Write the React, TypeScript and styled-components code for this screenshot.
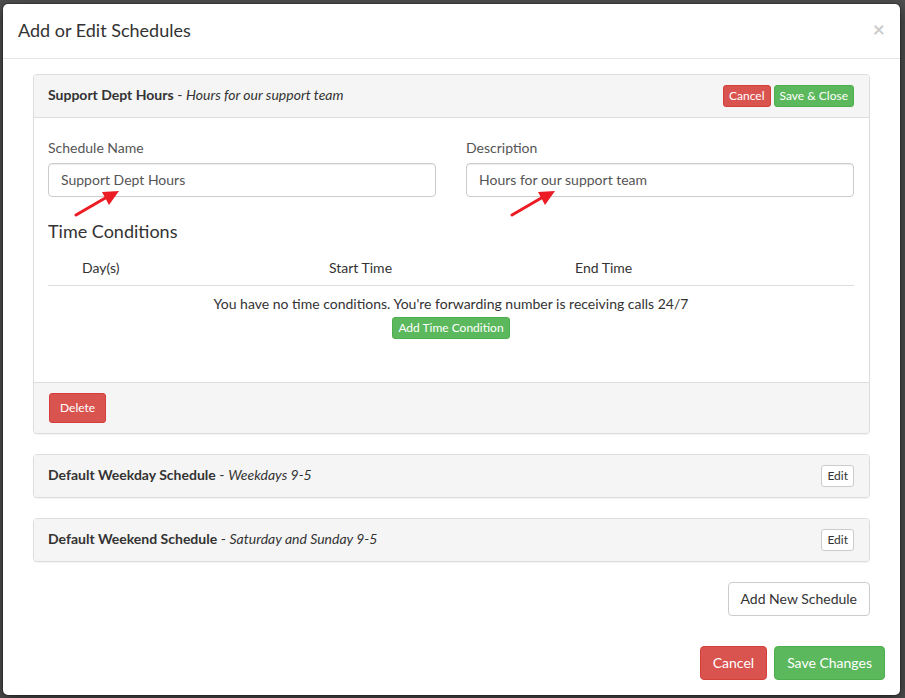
import { createGlobalStyle, styled } from 'styled-components';

const GlobalStyle = createGlobalStyle`
	* {
		box-sizing: border-box;
	}
	body {
		margin: 0;
		background: #4f4f4f;
		font-family: Lato, 'Open Sans', 'Liberation Sans', sans-serif;
		font-size: 14px;
		line-height: 1.42857;
		color: #333;
	}
`;

const Backdrop = styled.div`
	min-height: 698px;
	padding: 3px 0 3px 2px;
`;

const Modal = styled.div`
	width: 899px;
	background: #fff;
	border: 1px solid rgba(0, 0, 0, 0.2);
	border-radius: 6px;
	box-shadow: 0 5px 15px rgba(0, 0, 0, 0.5);
	background-clip: padding-box;
`;

const Header = styled.div`
	display: flex;
	align-items: center;
	justify-content: space-between;
	padding: 14px 15px 14px;
	border-bottom: 1px solid #e5e5e5;
`;

const Title = styled.h4`
	margin: 0;
	font-size: 18px;
	font-weight: 400;
	line-height: 1.42857;
`;

const Close = styled.button`
	border: 0;
	background: none;
	padding: 0;
	margin-top: -4px;
	font-family: inherit;
	font-size: 21px;
	font-weight: 700;
	line-height: 1;
	color: #000;
	opacity: 0.2;
	cursor: pointer;
`;

const Body = styled.div`
	padding: 15px 30px;
	display: flex;
	flex-direction: column;
	gap: 20px;
`;

const Panel = styled.div`
	border: 1px solid #ddd;
	border-radius: 4px;
	background: #fff;
	box-shadow: 0 1px 1px rgba(0, 0, 0, 0.05);
	overflow: hidden;
`;

const PanelHeading = styled.div<{ $open?: boolean }>`
	display: flex;
	align-items: center;
	justify-content: space-between;
	padding: 10px 15px 10px 14px;
	min-height: 42px;
	background: #f5f5f5;
	border-bottom: ${(p) => (p.$open ? '1px solid #ddd' : '0')};
`;

const PanelTitle = styled.div`
	font-size: 14px;
	color: #333;
	margin-top: -2px;

	strong {
		font-weight: 700;
	}

	em {
		font-style: italic;
	}
`;

const PanelBody = styled.div`
	padding: 20px 15px 15px 14px;
`;

const PanelFooter = styled.div`
	padding: 10px 15px;
	background: #f5f5f5;
	border-top: 1px solid #ddd;
`;

const ButtonGroup = styled.div`
	display: flex;
	gap: 3px;
`;

const Button = styled.button<{
	$variant?: 'danger' | 'success' | 'default';
	$size?: 'xs' | 'sm' | 'md';
}>`
	display: inline-block;
	font-family: inherit;
	font-weight: 400;
	cursor: pointer;
	white-space: nowrap;
	border: 1px solid transparent;
	color: #fff;
	background: ${(p) =>
		p.$variant === 'danger'
			? '#d9534f'
			: p.$variant === 'success'
			? '#5cb85c'
			: '#fff'};
	border-color: ${(p) =>
		p.$variant === 'danger'
			? '#d43f3a'
			: p.$variant === 'success'
			? '#4cae4c'
			: '#ccc'};
	${(p) => p.$variant === 'default' && 'color: #333;'}
	${(p) =>
		p.$size === 'xs'
			? 'padding: 1px 5px; font-size: 12px; line-height: 1.5; border-radius: 3px;'
			: p.$size === 'sm'
			? 'padding: 5px 10px; font-size: 12px; line-height: 1.5; border-radius: 3px;'
			: 'padding: 6px 12px; font-size: 14px; line-height: 1.42857; border-radius: 4px;'}
`;

const FormRow = styled.div`
	display: grid;
	grid-template-columns: 1fr 1fr;
	column-gap: 30px;
`;

const FormGroup = styled.div`
	position: relative;
	margin-bottom: 15px;
`;

const Label = styled.label`
	display: block;
	margin-bottom: 5px;
	font-weight: 400;
	color: #555;
`;

const Input = styled.input`
	display: block;
	width: 100%;
	height: 34px;
	padding: 6px 12px;
	font-family: inherit;
	font-size: 14px;
	color: #555;
	border: 1px solid #ccc;
	border-radius: 4px;
	box-shadow: inset 0 1px 1px rgba(0, 0, 0, 0.075);
`;

const ArrowMark = styled.svg<{ $left: number }>`
	position: absolute;
	top: 50px;
	left: ${(p) => p.$left}px;
	width: 48px;
	height: 30px;
	pointer-events: none;
`;

const SectionTitle = styled.h4`
	margin: 10px 0 9px;
	font-size: 18px;
	font-weight: 400;
	line-height: 1.1;
	padding: 0;
`;

const TableHead = styled.div`
	display: grid;
	grid-template-columns: 247px 246px 1fr;
	padding: 8px 0 7px 34px;
	border-bottom: 1px solid #ddd;
`;

const TableEmpty = styled.div`
	display: flex;
	flex-direction: column;
	align-items: center;
	gap: 3px;
	padding: 8px 0;
	margin-bottom: 20px;
`;

const Actions = styled.div`
	display: flex;
	justify-content: flex-end;
`;

const Footer = styled.div`
	display: flex;
	justify-content: flex-end;
	gap: 7px;
	padding: 15px;
`;

const Arrow = ({ left }: { left: number }) => (
	<ArrowMark $left={left} viewBox='0 0 48 30'>
		<line
			x1='2'
			y1='27'
			x2='33'
			y2='9'
			stroke='#ec1c24'
			strokeWidth='3'
			strokeLinecap='round'
		/>
		<polygon points='45,3 28,4 35,17' fill='#ec1c24' />
	</ArrowMark>
);

const schedules = [
	{ name: 'Default Weekday Schedule', description: 'Weekdays 9-5' },
	{ name: 'Default Weekend Schedule', description: 'Saturday and Sunday 9-5' },
];

const App = () => {
	return (
		<>
			<GlobalStyle />
			<Backdrop>
				<Modal>
					<Header>
						<Title>Add or Edit Schedules</Title>
						<Close aria-label='Close'>×</Close>
					</Header>
					<Body>
						<Panel>
							<PanelHeading $open>
								<PanelTitle>
									<strong>Support Dept Hours</strong> -{' '}
									<em>Hours for our support team</em>
								</PanelTitle>
								<ButtonGroup>
									<Button $variant='danger' $size='xs'>
										Cancel
									</Button>
									<Button $variant='success' $size='xs'>
										Save &amp; Close
									</Button>
								</ButtonGroup>
							</PanelHeading>
							<PanelBody>
								<FormRow>
									<FormGroup>
										<Label htmlFor='schedule-name'>Schedule Name</Label>
										<Input
											id='schedule-name'
											defaultValue='Support Dept Hours'
										/>
										<Arrow left={26} />
									</FormGroup>
									<FormGroup>
										<Label htmlFor='schedule-desc'>Description</Label>
										<Input
											id='schedule-desc'
											defaultValue='Hours for our support team'
										/>
										<Arrow left={44} />
									</FormGroup>
								</FormRow>
								<SectionTitle>Time Conditions</SectionTitle>
								<TableHead>
									<span>Day(s)</span>
									<span>Start Time</span>
									<span>End Time</span>
								</TableHead>
								<TableEmpty>
									<span>
										You have no time conditions. You're forwarding number is
										receiving calls 24/7
									</span>
									<Button $variant='success' $size='xs'>
										Add Time Condition
									</Button>
								</TableEmpty>
							</PanelBody>
							<PanelFooter>
								<Button $variant='danger' $size='sm'>
									Delete
								</Button>
							</PanelFooter>
						</Panel>
						{schedules.map((schedule) => (
							<Panel key={schedule.name}>
								<PanelHeading>
									<PanelTitle>
										<strong>{schedule.name}</strong> -{' '}
										<em>{schedule.description}</em>
									</PanelTitle>
									<Button $variant='default' $size='xs'>
										Edit
									</Button>
								</PanelHeading>
							</Panel>
						))}
						<Actions>
							<Button $variant='default'>Add New Schedule</Button>
						</Actions>
					</Body>
					<Footer>
						<Button $variant='danger'>Cancel</Button>
						<Button $variant='success'>Save Changes</Button>
					</Footer>
				</Modal>
			</Backdrop>
		</>
	);
};

export default App;
